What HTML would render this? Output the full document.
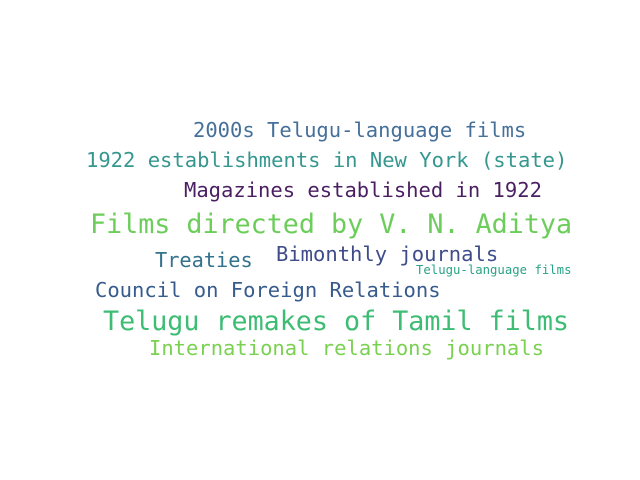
<!DOCTYPE html>
<html><head><style>
html,body{margin:0;padding:0;background:#fff;width:640px;height:480px;overflow:hidden}
div{position:absolute;white-space:nowrap;line-height:1;font-family:"DejaVu Sans Mono","Liberation Mono",monospace}
</style></head><body>
<div style="left:193px;top:119.7px;font-size:20.5px;color:#46709a">2000s Telugu-language films</div>
<div style="left:86px;top:149.7px;font-size:20.5px;color:#35978f">1922 establishments in New York (state)</div>
<div style="left:184px;top:179.7px;font-size:20.5px;color:#4a1f62">Magazines established in 1922</div>
<div style="left:90px;top:212.4px;font-size:26.7px;color:#6ccd5a">Films directed by V. N. Aditya</div>
<div style="left:155px;top:249.8px;font-size:20.3px;color:#33728d">Treaties</div>
<div style="left:276px;top:243.7px;font-size:20.5px;color:#3e4c8a">Bimonthly journals</div>
<div style="left:416px;top:263.6px;font-size:12.3px;color:#29a385">Telugu-language films</div>
<div style="left:95px;top:279.7px;font-size:20.5px;color:#375b8d">Council on Foreign Relations</div>
<div style="left:103px;top:309.4px;font-size:26.7px;color:#3dbc74">Telugu remakes of Tamil films</div>
<div style="left:149px;top:337.7px;font-size:20.5px;color:#7ad151">International relations journals</div>
</body></html>
